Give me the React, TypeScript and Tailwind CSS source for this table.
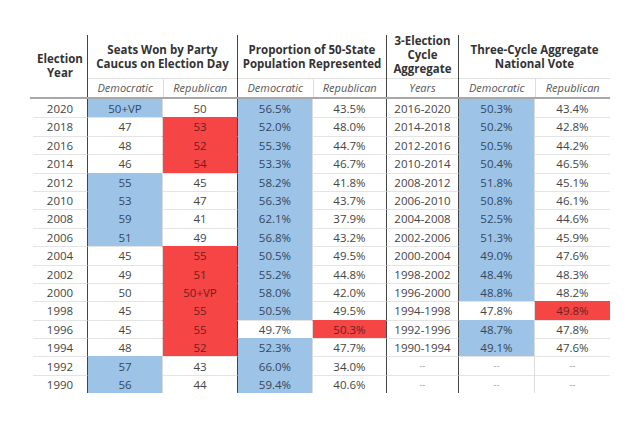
import React from "react";

type C = "" | "B" | "R";
type Row = { cells: string[]; colors: C[] };

const raw: [string[], C[]][] = [
  [["2020", "50+VP", "50", "56.5%", "43.5%", "2016-2020", "50.3%", "43.4%"], ["", "B", "", "B", "", "", "B", ""]],
  [["2018", "47", "53", "52.0%", "48.0%", "2014-2018", "50.2%", "42.8%"], ["", "", "R", "B", "", "", "B", ""]],
  [["2016", "48", "52", "55.3%", "44.7%", "2012-2016", "50.5%", "44.2%"], ["", "", "R", "B", "", "", "B", ""]],
  [["2014", "46", "54", "53.3%", "46.7%", "2010-2014", "50.4%", "46.5%"], ["", "", "R", "B", "", "", "B", ""]],
  [["2012", "55", "45", "58.2%", "41.8%", "2008-2012", "51.8%", "45.1%"], ["", "B", "", "B", "", "", "B", ""]],
  [["2010", "53", "47", "56.3%", "43.7%", "2006-2010", "50.8%", "46.1%"], ["", "B", "", "B", "", "", "B", ""]],
  [["2008", "59", "41", "62.1%", "37.9%", "2004-2008", "52.5%", "44.6%"], ["", "B", "", "B", "", "", "B", ""]],
  [["2006", "51", "49", "56.8%", "43.2%", "2002-2006", "51.3%", "45.9%"], ["", "B", "", "B", "", "", "B", ""]],
  [["2004", "45", "55", "50.5%", "49.5%", "2000-2004", "49.0%", "47.6%"], ["", "", "R", "B", "", "", "B", ""]],
  [["2002", "49", "51", "55.2%", "44.8%", "1998-2002", "48.4%", "48.3%"], ["", "", "R", "B", "", "", "B", ""]],
  [["2000", "50", "50+VP", "58.0%", "42.0%", "1996-2000", "48.8%", "48.2%"], ["", "", "R", "B", "", "", "B", ""]],
  [["1998", "45", "55", "50.5%", "49.5%", "1994-1998", "47.8%", "49.8%"], ["", "", "R", "B", "", "", "", "R"]],
  [["1996", "45", "55", "49.7%", "50.3%", "1992-1996", "48.7%", "47.8%"], ["", "", "R", "", "R", "", "B", ""]],
  [["1994", "48", "52", "52.3%", "47.7%", "1990-1994", "49.1%", "47.6%"], ["", "", "R", "B", "", "", "B", ""]],
  [["1992", "57", "43", "66.0%", "34.0%", "--", "--", "--"], ["", "B", "", "B", "", "", "", ""]],
  [["1990", "56", "44", "59.4%", "40.6%", "--", "--", "--"], ["", "B", "", "B", "", "", "", ""]],
];

const rows: Row[] = raw.map(([cells, colors]) => ({ cells, colors }));

const widths = ["w-[54px]", "w-[75px]", "w-[75px]", "w-[75px]", "w-[74px]", "w-[72px]", "w-[76px]", "w-[76px]"];
const leftBorder = [
  "",
  "border-l border-l-[#444]",
  "border-l border-l-[#dcdcdc]",
  "border-l border-l-[#444]",
  "border-l border-l-[#dcdcdc]",
  "border-l border-l-[#444]",
  "border-l border-l-[#444]",
  "border-l border-l-[#dcdcdc]",
];

function Cell({ text, color, i, first }: { text: string; color: C; i: number; first: boolean }) {
  const bg =
    color === "B"
      ? "bg-[#9dc3e6] text-[#34475c]"
      : color === "R"
      ? "bg-[#f54545] text-[#6e1f1f]"
      : text === "--"
      ? "bg-white text-[#999] text-[9px]"
      : "bg-white text-[#454545]";
  const top = first
    ? ""
    : color === "B"
    ? "border-t border-t-[#9dc3e6]"
    : color === "R"
    ? "border-t border-t-[#f54545]"
    : "border-t border-t-[#e4e4e4]";
  return (
    <div className={`${widths[i]} ${leftBorder[i]} ${bg} ${top} flex items-center justify-center shrink-0`}>
      {text}
    </div>
  );
}

export default function App() {
  return (
    <div
      className="w-[639px] h-[426px] bg-white pt-[35px] pl-[33px]"
      style={{ fontFamily: '"Open Sans", "Noto Sans", sans-serif' }}
    >
      <div className="w-[577px]">
        {/* header */}
        <div className="flex h-[62px] text-[#333] font-bold text-[11.5px] leading-[14px]">
          <div className="w-[54px] flex items-center justify-center text-center shrink-0">
            Election
            <br />
            Year
          </div>
          <div className="w-[150px] flex flex-col border-l border-l-[#444] shrink-0">
            <div className="h-[44px] flex items-center justify-center text-center border-b border-b-[#e0e0e0]">
              Seats Won by Party
              <br />
              Caucus on Election Day
            </div>
            <div className="flex-1 flex font-normal italic text-[#555] text-[11px]">
              <div className="w-[75px] flex items-center justify-center">Democratic</div>
              <div className="w-[75px] flex items-center justify-center border-l border-l-[#dcdcdc]">Republican</div>
            </div>
          </div>
          <div className="w-[149px] flex flex-col border-l border-l-[#444] shrink-0">
            <div className="h-[44px] flex items-center justify-center text-center border-b border-b-[#e0e0e0]">
              Proportion of 50-State
              <br />
              Population Represented
            </div>
            <div className="flex-1 flex font-normal italic text-[#555] text-[11px]">
              <div className="w-[75px] flex items-center justify-center">Democratic</div>
              <div className="w-[74px] flex items-center justify-center border-l border-l-[#dcdcdc]">Republican</div>
            </div>
          </div>
          <div className="w-[72px] flex flex-col border-l border-l-[#444] shrink-0">
            <div className="h-[44px] flex items-center justify-center text-center border-b border-b-[#e0e0e0] pb-[4px]">
              3-Election
              <br />
              Cycle
              <br />
              Aggregate
            </div>
            <div className="flex-1 flex items-center justify-center font-normal italic text-[#555] text-[11px]">
              Years
            </div>
          </div>
          <div className="w-[152px] flex flex-col border-l border-l-[#444] shrink-0">
            <div className="h-[44px] flex items-center justify-center text-center border-b border-b-[#e0e0e0]">
              Three-Cycle Aggregate
              <br />
              National Vote
            </div>
            <div className="flex-1 flex font-normal italic text-[#555] text-[11px]">
              <div className="w-[76px] flex items-center justify-center">Democratic</div>
              <div className="w-[76px] flex items-center justify-center border-l border-l-[#dcdcdc]">Republican</div>
            </div>
          </div>
        </div>
        <div className="h-[2px] bg-[#a8a8a8] -ml-[3px]" />
        {/* rows */}
        <div className="text-[11.5px]">
          {rows.map((r, ri) => (
            <div key={ri} className="flex h-[18.4px]">
              {r.cells.map((t, ci) => (
                <Cell key={ci} text={t} color={r.colors[ci]} i={ci} first={ri === 0} />
              ))}
            </div>
          ))}
        </div>
      </div>
    </div>
  );
}
